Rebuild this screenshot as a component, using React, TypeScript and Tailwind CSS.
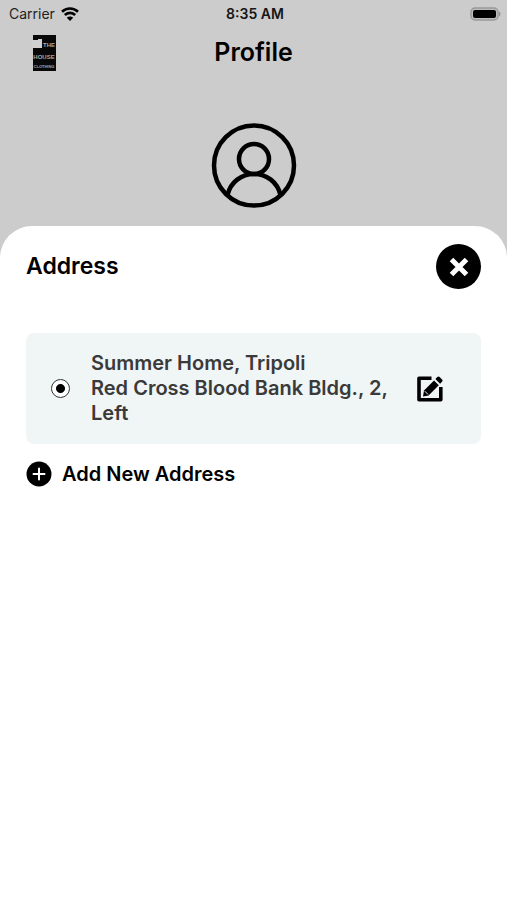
import { useState } from "react";

const addresses = [
  {
    id: "summer-home",
    title: "Summer Home, Tripoli",
    details: "Red Cross Blood Bank Bldg., 2, Left",
  },
];

function StatusBar() {
  return (
    <div className="grid h-7 grid-cols-3 items-center pl-[9px] pr-[6px] text-sm">
      <div className="flex items-center gap-[6px] text-[#222222]">
        <span>Carrier</span>
        <svg viewBox="0 0 18 14" className="h-[14px] w-[18px]" fill="none" aria-hidden="true">
          <path d="M1 4.700a11.500 11.500 0 0 1 16 0M3.800 8a7.400 7.400 0 0 1 10.400 0" stroke="#000" strokeWidth="2.6" />
          <path d="M9 14 5.800 10.700a4.600 4.600 0 0 1 6.400 0Z" fill="#000" />
        </svg>
      </div>
      <span className="text-center font-semibold text-[#161616]">8:35 AM</span>
      <svg viewBox="0 0 31 15" className="h-[15px] w-[31px] justify-self-end" aria-hidden="true">
        <rect x="1" y="1" width="27" height="12" rx="4" fill="#bdbdbd" stroke="#999999" strokeWidth="1.4" />
        <rect x="3" y="3" width="23" height="8" rx="2" fill="#000" />
        <path d="M29 4.500v5c2-.8 2-4.200 0-5Z" fill="#929292" />
      </svg>
    </div>
  );
}

function Logo() {
  return (
    <svg viewBox="0 0 24 37" className="h-[37px] w-6" role="img" aria-label="The House Clothing">
      <path d="M1 0h23v36H1Z" fill="#080808" />
      <path d="M0 5h6V4h4v9H0Z" fill="#d0d0d0" />
      <g fill="#a8a8a8" textAnchor="middle" fontFamily="'Liberation Sans', sans-serif" fontWeight="700">
        <text x="17" y="12" fontSize="6">THE</text>
        <text x="12" y="24" fontSize="6">HOUSE</text>
        <text x="12" y="33" fontSize="4">CLOTHING</text>
      </g>
    </svg>
  );
}

function Avatar() {
  return (
    <svg
      viewBox="0 0 86 86"
      className="mx-auto h-[86px] w-[86px]"
      fill="none"
      stroke="#000"
      strokeWidth="4.500"
      aria-hidden="true"
    >
      <circle cx="43" cy="43.500" r="40" />
      <circle cx="43" cy="37" r="15" />
      <path d="M16.500 73c3-13 14-21 26.500-21S66.500 60 69.500 73" />
    </svg>
  );
}

function EditIcon() {
  return (
    <svg viewBox="0 0 26 26" className="h-[26px] w-[26px]" aria-hidden="true">
      <path d="M14.500 2.200H2v21.600h21.800V11" fill="none" stroke="#000" strokeWidth="3.600" strokeLinejoin="round" />
      <path d="m17 4.400 4.800 4.800L11.600 19.400 6 20.500l1-5.900Z" fill="#000" />
      <path d="m18.400 3 1.900-1.900q1.200-1.200 2.400 0l2.300 2.300q1.200 1.200 0 2.400l-1.900 1.900Z" fill="#000" />
      <path d="m7.800 15.200 3.300 3.300" stroke="#f0f5f5" strokeWidth="1" />
    </svg>
  );
}

export default function App() {
  const [selected, setSelected] = useState(addresses[0].id);

  return (
    <div className="flex min-h-screen flex-col bg-[#cccccc] font-['Inter',sans-serif] text-black">
      <StatusBar />
      <header className="grid h-[50px] grid-cols-[24px_1fr_24px] items-center px-8">
        <Logo />
        <h1 className="text-center text-[25px] font-semibold">Profile</h1>
      </header>
      <div className="pb-[18px] pt-11">
        <Avatar />
      </div>

      <section
        role="dialog"
        aria-labelledby="address-title"
        className="flex-1 rounded-t-[32px] bg-white px-[26px] pt-[18px]"
      >
        <div className="flex items-center justify-between">
          <h2 id="address-title" className="text-[23px] font-semibold">Address</h2>
          <button type="button" aria-label="Close" className="flex size-[45px] items-center justify-center rounded-full bg-black">
            <svg viewBox="0 0 20 20" className="size-5" aria-hidden="true">
              <path d="m2.500 2.500 15 15M17.500 2.500l-15 15" stroke="#fff" strokeWidth="5" />
            </svg>
          </button>
        </div>

        <ul className="mt-11">
          {addresses.map((address) => (
            <li key={address.id} className="flex items-center rounded-lg bg-[#f0f5f5] py-[18px] pl-[25px] pr-[38px]">
              <input
                type="radio"
                name="address"
                id={address.id}
                checked={selected === address.id}
                onChange={() => setSelected(address.id)}
                className="size-[19px] shrink-0 appearance-none rounded-full border border-[#333333] bg-white checked:bg-[radial-gradient(circle,#000_4px,transparent_5px)]"
              />
              <label htmlFor={address.id} className="ml-[21px] flex-1 text-xl leading-[25px] font-semibold text-[#3a3a3a]">
                <span className="block">{address.title}</span>
                <span className="block">{address.details}</span>
              </label>
              <button type="button" aria-label="Edit address" className="ml-4 shrink-0">
                <EditIcon />
              </button>
            </li>
          ))}
        </ul>

        <button type="button" className="mt-4 flex items-center gap-[10px] text-xl font-semibold">
          <svg viewBox="0 0 26 26" className="size-[26px]" aria-hidden="true">
            <circle cx="13" cy="13" r="12.500" fill="#000" />
            <path d="M13 7.500v11M7.500 13h11" stroke="#fff" strokeWidth="2" strokeLinecap="round" />
          </svg>
          Add New Address
        </button>
      </section>
    </div>
  );
}
